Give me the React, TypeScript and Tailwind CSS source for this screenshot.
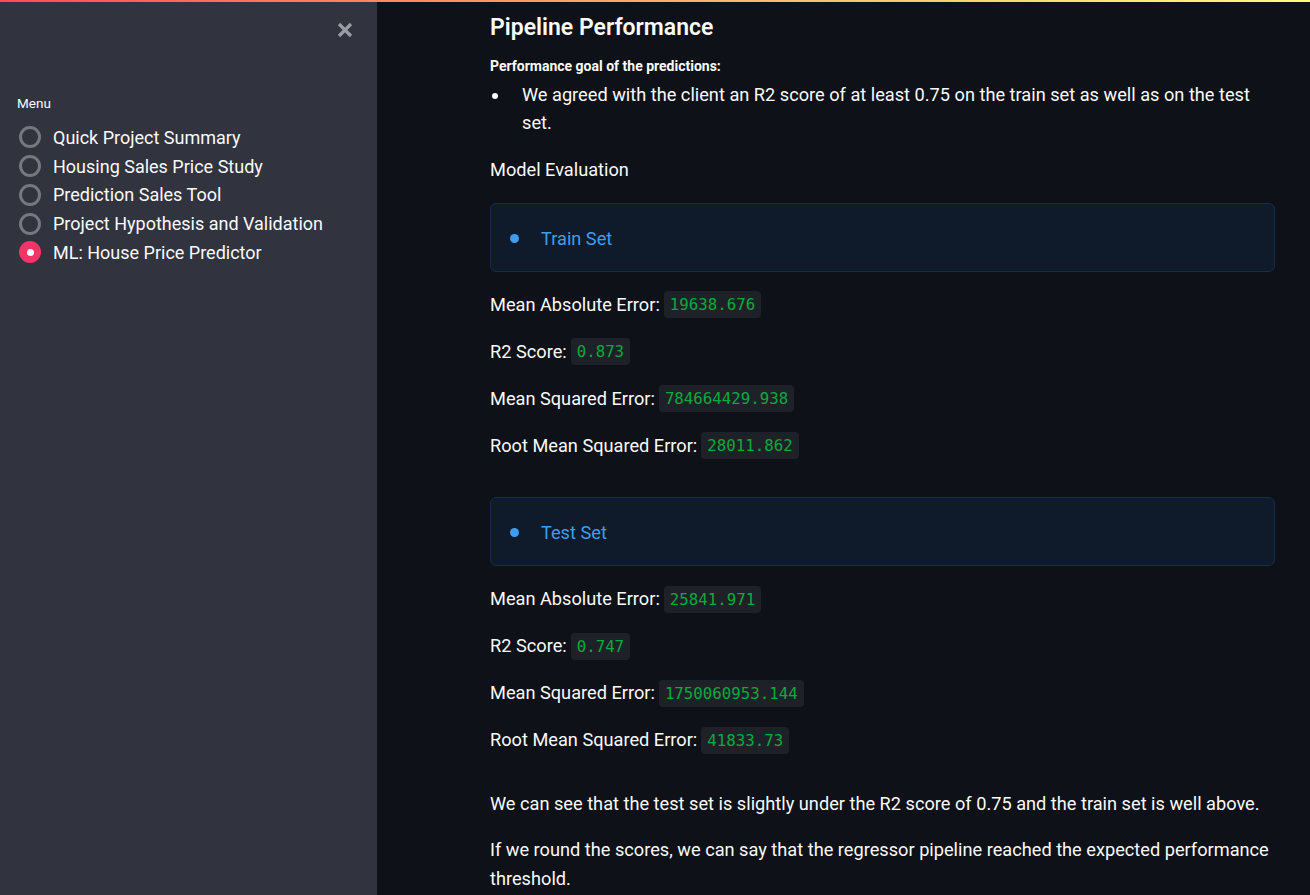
import React from "react";

const sans = { fontFamily: 'Roboto, "Noto Sans", sans-serif' };

function Code({ children }: { children: React.ReactNode }) {
  return (
    <code
      className="ml-[4px] inline-block rounded-[4px] bg-[#1f2129] px-[6px] text-[15.75px] leading-[27px] text-[#09ab3b]"
      style={{ fontFamily: '"DejaVu Sans Mono", "Liberation Mono", monospace' }}
    >
      {children}
    </code>
  );
}

function Metric({ label, value, first }: { label: string; value: string; first?: boolean }) {
  return (
    <div className={`flex items-center h-[28.8px] ${first ? "mt-[18.6px]" : "mt-[18.2px]"}`}>
      <span className="pt-[1px]">{label}</span>
      <Code>{value}</Code>
    </div>
  );
}

function InfoBox({ text, mt }: { text: string; mt: string }) {
  return (
    <div
      className={`${mt} h-[69px] w-full rounded-[6px] border border-[#132d4a] bg-[#0f1b2b] flex items-center pl-[19px]`}
    >
      <span className="w-[9px] h-[9px] rounded-full bg-[#3d9df3] mr-[22px] mt-[2px]" />
      <span className="text-[#3d9df3] mt-[3px]">{text}</span>
    </div>
  );
}

function Radio({ label, selected }: { label: string; selected?: boolean }) {
  return (
    <div className="flex items-center h-[28.75px]">
      {selected ? (
        <span className="w-[22px] h-[22px] rounded-full bg-[#f63366] flex items-center justify-center">
          <span className="w-[7px] h-[7px] rounded-full bg-white" />
        </span>
      ) : (
        <span className="w-[22px] h-[22px] rounded-full border-[3px] border-[#77787e]" />
      )}
      <span className="ml-[12px] text-[18px] text-[#fafafa]">{label}</span>
    </div>
  );
}

export default function App() {
  return (
    <div className="relative w-[1310px] h-[895px] overflow-hidden bg-[#0e1117] text-[#fafafa]" style={sans}>
      <div className="absolute left-0 top-0 right-0 h-[2px] z-10 bg-gradient-to-r from-[#ff4b4b] to-[#fffd80]" />
      <div className="flex h-full">
        <aside className="w-[377px] shrink-0 h-full bg-[#31333f] relative">
          <svg className="absolute left-[337px] top-[22px]" width="16" height="16" viewBox="0 0 16 16">
            <path d="M2 2 L14 14 M14 2 L2 14" stroke="#9a9ba3" strokeWidth="3.2" strokeLinecap="butt" />
          </svg>
          <div className="pl-[17px] pt-[94px]">
            <div className="text-[13.5px] leading-[18px] text-[#fafafa]">Menu</div>
            <div className="mt-[11px] pl-[2px] flex flex-col">
              <Radio label="Quick Project Summary" />
              <Radio label="Housing Sales Price Study" />
              <Radio label="Prediction Sales Tool" />
              <Radio label="Project Hypothesis and Validation" />
              <Radio label="ML: House Price Predictor" selected />
            </div>
          </div>
        </aside>
        <main className="flex-1 pl-[113px]">
          <div className="w-[785px] flex flex-col text-[18.2px] leading-[28.8px]">
            <h3 className="mt-[12px] text-[23px] leading-[32px] font-semibold">Pipeline Performance</h3>
            <div className="mt-[12px] text-[14px] leading-[20px] font-bold">Performance goal of the predictions:</div>
            <ul className="mt-[4.6px] flex">
              <li className="flex">
                <span className="w-[32px] shrink-0 pl-[2px] pt-[12px]">
                  <span className="block w-[6px] h-[6px] rounded-full bg-[#fafafa]" />
                </span>
                <span>
                  We agreed with the client an R2 score of at least 0.75 on the train set as well as on the test set.
                </span>
              </li>
            </ul>
            <div className="mt-[17.4px]">Model Evaluation</div>
            <InfoBox text="Train Set" mt="mt-[18.6px]" />
            <Metric first label="Mean Absolute Error:" value="19638.676" />
            <Metric label="R2 Score:" value="0.873" />
            <Metric label="Mean Squared Error:" value="784664429.938" />
            <Metric label="Root Mean Squared Error:" value="28011.862" />
            <InfoBox text="Test Set" mt="mt-[36.8px]" />
            <Metric first label="Mean Absolute Error:" value="25841.971" />
            <Metric label="R2 Score:" value="0.747" />
            <Metric label="Mean Squared Error:" value="1750060953.144" />
            <Metric label="Root Mean Squared Error:" value="41833.73" />
            <p className="mt-[35.4px]">
              We can see that the test set is slightly under the R2 score of 0.75 and the train set is well above.
            </p>
            <p className="mt-[17.6px]">
              If we round the scores, we can say that the regressor pipeline reached the expected performance threshold.
            </p>
          </div>
        </main>
      </div>
    </div>
  );
}
